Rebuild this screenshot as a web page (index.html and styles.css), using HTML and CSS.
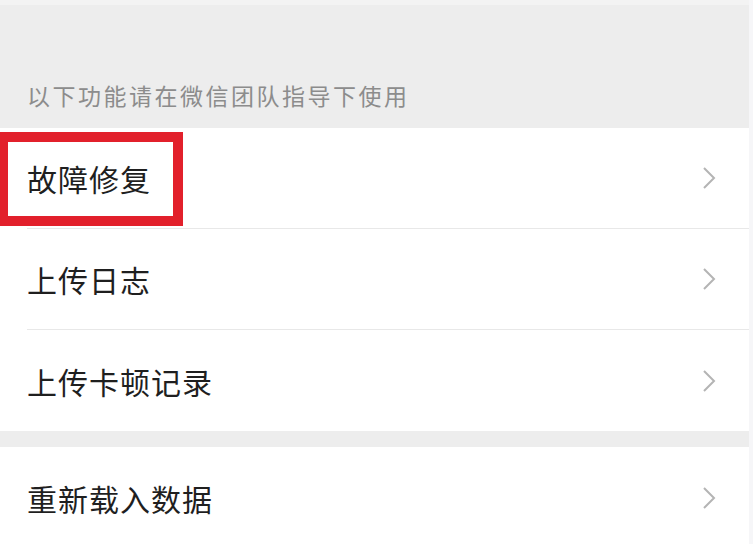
FILE: index.html
```html
<!DOCTYPE html>
<html lang="zh-CN">
<head>
  <meta charset="UTF-8" />
  <meta name="viewport" content="width=device-width, initial-scale=1.0"/>
  <title>故障修复</title>
  <link rel="stylesheet" href="styles.css">
</head>
<body>
  <div class="page">
    <div class="section-title">以下功能请在微信团队指导下使用</div>

    <div class="group">
      <div class="item">
        <div class="item-inner">
          <span class="item-label">故障修复</span>
          <svg class="arrow" width="14" height="24" viewBox="0 0 14 24"><path d="M2 2 L12 12 L2 22" /></svg>
        </div>
        <div class="highlight"></div>
      </div>
      <div class="item">
        <div class="item-inner">
          <span class="item-label">上传日志</span>
          <svg class="arrow" width="14" height="24" viewBox="0 0 14 24"><path d="M2 2 L12 12 L2 22" /></svg>
        </div>
      </div>
      <div class="item last">
        <div class="item-inner">
          <span class="item-label">上传卡顿记录</span>
          <svg class="arrow" width="14" height="24" viewBox="0 0 14 24"><path d="M2 2 L12 12 L2 22" /></svg>
        </div>
      </div>
    </div>

    <div class="group">
      <div class="item last">
        <div class="item-inner">
          <span class="item-label">重新载入数据</span>
          <svg class="arrow" width="14" height="24" viewBox="0 0 14 24"><path d="M2 2 L12 12 L2 22" /></svg>
        </div>
      </div>
    </div>
  </div>
</body>
</html>
```

FILE: styles.css
```css
body {
  margin: 0;
  background-color: #f6f6f8;
  font-family: "Noto Sans CJK SC", "Noto Sans", sans-serif;
}

.page {
  margin-right: 4px;
  background-color: #ededed;
  border-top: 5px solid #f3f3f3;
  overflow: hidden;
}

.section-title {
  height: 123px;
  box-sizing: border-box;
  display: flex;
  align-items: flex-end;
  padding: 0 0 17px 27px;
  font-size: 23px;
  line-height: 32px;
  letter-spacing: 2.5px;
  color: #8c8c8c;
}

.group {
  background-color: #ffffff;
  margin-bottom: 16px;
}

.item {
  position: relative;
  padding-left: 27px;
}

.item-inner {
  height: 101px;
  box-sizing: border-box;
  display: flex;
  align-items: center;
  justify-content: space-between;
  padding-right: 33px;
  border-bottom: 1px solid #e8e8e8;
}

.item.last .item-inner {
  border-bottom: none;
}

.item-label {
  font-size: 30px;
  letter-spacing: 1px;
  color: #1f1f1f;
}

.arrow path {
  fill: none;
  stroke: #b4b4b4;
  stroke-width: 2;
}

/* red marker drawn over the first row */
.highlight {
  position: absolute;
  left: -2px;
  top: 4px;
  width: 165px;
  height: 74px;
  border: 10px solid #e2202b;
}
```
